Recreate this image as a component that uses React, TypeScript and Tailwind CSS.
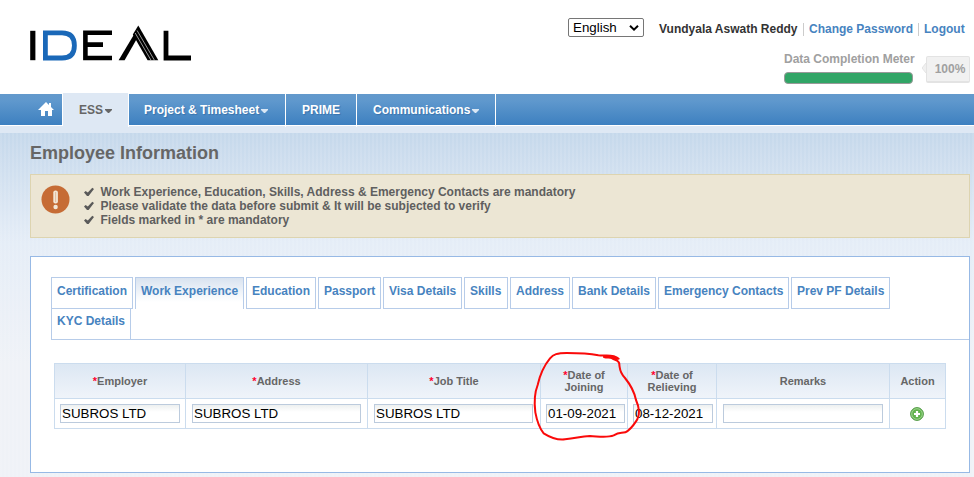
import React from "react";

const tabs: [string, string][] = [
  ["Certification", "w-[82px]"],
  ["Work Experience", "w-[109px]"],
  ["Education", "w-[70px]"],
  ["Passport", "w-[63px]"],
  ["Visa Details", "w-[79px]"],
  ["Skills", "w-[44px]"],
  ["Address", "w-[60px]"],
  ["Bank Details", "w-[84px]"],
  ["Emergency Contacts", "w-[131px]"],
  ["Prev PF Details", "w-[99px]"],
];

const notices = [
  "Work Experience, Education, Skills, Address & Emergency Contacts are mandatory",
  "Please validate the data before submit & It will be subjected to verify",
  "Fields marked in * are mandatory",
];

const columns = [
  { label: ["Employer"], required: true, value: "SUBROS LTD", field: "ml-[5px] w-[120px]" },
  { label: ["Address"], required: true, value: "SUBROS LTD", field: "ml-[6px] w-[169px]" },
  { label: ["Job Title"], required: true, value: "SUBROS LTD", field: "ml-[6px] w-[159px]" },
  { label: ["Date of", "Joining"], required: true, value: "01-09-2021", field: "ml-[5px] w-[79px]" },
  { label: ["Date of", "Relieving"], required: true, value: "08-12-2021", field: "ml-[5px] w-[80px]" },
  { label: ["Remarks"], required: false, value: "", field: "ml-[6px] w-[160px]" },
];

const grid = "grid grid-cols-[131px_182px_173px_87px_89px_173px_56px]";

function Caret({ className }: { className: string }) {
  return (
    <svg className={className} width="7" height="4" viewBox="0 0 7 4" fill="currentColor">
      <path d="M0 0H7V1L4 4H3L0 1Z" />
    </svg>
  );
}

function Logo() {
  return (
    <svg className="mt-[25px] ml-[30px] h-9 w-[162px]" viewBox="30 25 162 36" fill="none" role="img" aria-label="IDEAL">
      <path d="M32.8 30.8V60.2" stroke="#000" strokeWidth="5.2" />
      <path d="M45.4 32.8H62C70.5 32.8 74.4 37.5 74.4 45.4S70.5 58 62 58H45.4Z" stroke="#1a68b8" strokeWidth="4.8" />
      <path d="M112 32.8H85.4V58H112M85.4 44.6H103" stroke="#000" strokeWidth="4.6" />
      <path d="M118.6 60.2L134 34.5L137.3 38L124.6 60.2Z" fill="#000" />
      <path d="M138.3 25.5L158.3 60.2H147.6L132.8 34.5Z" fill="#000" />
      <path d="M135.2 33L151 60.2M137.1 30.5L154.4 60.2" stroke="#ddd" strokeWidth=".7" />
      <path d="M166 30.8V58H191" stroke="#000" strokeWidth="4.8" />
    </svg>
  );
}

function Header() {
  return (
    <header className="flex h-[93px] justify-between bg-white">
      <Logo />
      <div className="flex w-[406px] flex-col">
        <div className="mt-[18px] flex h-5 items-center font-bold text-[#4783c0]">
          <div className="mb-px flex h-[19px] w-[76px] items-center justify-between rounded-[2px] border border-[#767676] pr-1 pl-1 text-[13.33px] font-normal text-black">
            English
            <svg width="10" height="6" viewBox="0 0 10 6" fill="none" stroke="currentColor" strokeWidth="2">
              <path d="M1 .8L5 4.6L9 .8" />
            </svg>
          </div>
          <span className="ml-[15px] w-[144px] pt-0.5 text-[#333]">Vundyala Aswath Reddy</span>
          <span className="mt-0.5 h-[13px] w-px bg-[#ccc]" />
          <span className="ml-[5px] w-[109px] pt-0.5">Change Password</span>
          <span className="mt-0.5 h-[13px] w-px bg-[#ccc]" />
          <span className="ml-[5px] pt-0.5">Logout</span>
        </div>
        <div className="mt-[13px] flex pl-[216px] font-bold text-[#a0a0a0]">
          <div className="w-[138px]">
            <div className="h-[21px] leading-4 whitespace-nowrap">Data Completion Meter</div>
            <div className="h-3 w-[129px] rounded-[4px] border border-[#999] bg-[#31a566]" />
          </div>
          <svg className="mt-3 h-[10px] w-[4px]" viewBox="0 0 4 10">
            <path d="M4 0L0 5L4 10" fill="#f0f0f0" stroke="#e4e4e4" />
          </svg>
          <div className="mt-[5px] flex h-[27px] w-[44px] items-center justify-center rounded-[2px] border border-b-2 border-[#e3e3e3] bg-[#f1f1f1] pl-1">
            100%
          </div>
        </div>
      </div>
    </header>
  );
}

function Nav() {
  return (
    <nav className="h-10 bg-[#dee8f4]">
      <div className="flex h-[33px] bg-[linear-gradient(#fff_1px,#6399cc_1px,#5f98cd_8px,#3d80c0_32px,#fff_32px)] font-bold text-white">
        <div className="h-8 w-[63px] border-r border-white pt-[9px] pl-[38px]">
          <svg width="16" height="14" viewBox="0 0 16 14" fill="#fff">
            <path d="M8 0L11 3V1H13V5L16 8H14V14H10V9H7V14H3V8H0Z" />
          </svg>
        </div>
        <div className="flex h-[34px] w-[65px] items-center justify-center gap-[2px] bg-[#dee8f4] text-[#666]">
          <span>ESS</span>
          <Caret className="mt-0.5" />
        </div>
        <div className="flex h-[34px] w-[158px] items-center border-x border-white pl-[15px] [text-shadow:1px_1px_1px_#3973ad]">
          Project &amp; Timesheet
          <Caret className="mt-0.5 ml-[2px] text-[#d9e7f5]" />
        </div>
        <div className="flex h-[34px] w-[71px] items-center border-r border-white pl-4 [text-shadow:1px_1px_1px_#3973ad]">PRIME</div>
        <div className="flex h-[34px] w-[139px] items-center border-r border-white pl-[16px] [text-shadow:1px_1px_1px_#3973ad]">
          Communications
          <Caret className="mt-0.5 ml-[2px] text-[#d9e7f5]" />
        </div>
      </div>
    </nav>
  );
}

function Notice() {
  return (
    <section className="flex h-16 w-[940px] border border-[#ddd4b0] bg-[#ece6d4] pt-[10px] pl-[10px]">
      <svg width="29" height="29" viewBox="0 0 29 29">
        <circle cx="14.5" cy="14.5" r="14" fill="#c66c35" />
        <rect x="12.3" y="5.5" width="4.6" height="13" rx="2" fill="#f2e7d7" />
        <rect x="14.1" y="7" width="1" height="10" fill="#c66c35" opacity=".35" />
        <circle cx="14.6" cy="22" r="2.2" fill="#f2e7d7" />
      </svg>
      <ul className="ml-[14px] font-bold text-[#5f5f5f]">
        {notices.map((text) => (
          <li key={text} className="flex h-[14px] items-center">
            <svg className="mr-[6.5px]" width="10" height="10" viewBox="0 0 10 10" fill="#5a5a5a">
              <path d="M0 5.5L1.6 4L3.8 5.6L8.3 .8L10 2L4.6 9H3Z" />
            </svg>
            {text}
          </li>
        ))}
      </ul>
    </section>
  );
}

function Tabs() {
  return (
    <div className="h-[63px] border-b border-[#b7cce9] font-bold text-[#4783c0]">
      <div className="flex h-8 gap-[2px]">
        {tabs.map(([label, width]) => (
          <div
            key={label}
            className={`${width} h-8 shrink-0 border border-[#b7cce9] pt-[5px] pl-[5px] leading-4 whitespace-nowrap ${
              label === "Work Experience" ? "border-b-0 bg-[linear-gradient(#d9e3f0,#fff_24px)]" : ""
            }`}
          >
            {label}
          </div>
        ))}
      </div>
      <div className="h-[30px] w-20 border-x border-[#b7cce9] pt-1 pl-[5px] leading-4">KYC Details</div>
    </div>
  );
}

function ExperienceTable() {
  return (
    <div className="mt-[23px] ml-[3px] w-[892px] border-t border-l border-[#cbdcee]">
      <div className={`${grid} h-[35px] bg-[linear-gradient(#dce7f3,#f0f4fa)] text-center text-[11px] leading-3 font-bold text-[#666]`}>
        {columns.map((c) => (
          <div key={c.label.join(" ")} className="flex flex-col items-center justify-center border-r border-b border-[#cbdcee]">
            {c.label.map((line, i) => (
              <div key={line}>
                {c.required && i === 0 && <span className="text-[#ff0030]">*</span>}
                {line}
              </div>
            ))}
          </div>
        ))}
        <div className="flex items-center justify-center border-r border-b border-[#cbdcee]">Action</div>
      </div>
      <div className={`${grid} h-[30px]`}>
        {columns.map((c) => (
          <div key={c.label.join(" ")} className="border-r border-b border-[#cbdcee] pt-[5px]">
            <div className={`${c.field} h-[19px] border border-[#bccbdd] bg-[linear-gradient(#edf0f0,#fff_7px)] pl-px text-[13.33px] leading-[17px] text-black`}>
              {c.value}
            </div>
          </div>
        ))}
        <div className="flex items-center justify-center border-r border-b border-[#cbdcee] pr-px">
          <svg width="14" height="14" viewBox="0 0 14 14">
            <circle cx="7" cy="7" r="6.4" fill="#61b34d" stroke="#539a47" />
            <circle cx="7" cy="7" r="5.3" fill="none" stroke="#a5d796" strokeWidth=".9" />
            <path d="M7 4V10M4 7H10" stroke="#fff" strokeWidth="2.2" />
          </svg>
        </div>
      </div>
    </div>
  );
}

export default function App() {
  return (
    <div className="relative h-[477px] w-[974px] overflow-hidden bg-white font-['Liberation_Sans',Arial,sans-serif] text-[12px]">
      <Header />
      <Nav />
      <main className="h-[344px] bg-[repeating-linear-gradient(90deg,#ffffff18_0_2px,#ffffff00_2px_4px),linear-gradient(#c5d8eb,#e5edf7_110px,#eff2f7_230px)] pl-[30px]">
        <h1 className="h-[41px] pt-[9px] text-[18px] leading-[22px] font-bold text-[#666]">Employee Information</h1>
        <Notice />
        <section className="mt-[18px] h-[217px] w-[940px] border border-[#97b9e5] bg-white pt-5 pl-5">
          <Tabs />
          <ExperienceTable />
        </section>
      </main>
      <svg className="pointer-events-none absolute top-[345px] left-[530px] h-[100px] w-[115px]" viewBox="630 285 345 300" fill="none" stroke="#fa0a0a" strokeWidth="6" strokeLinejoin="round" strokeLinecap="round">
        <path d="M896 326C878 311 858 319 835 316C805 310 770 309 740 309C712 309 700 313 690 325C671 348 659 378 653 405C645 425 642 455 646 487C652 519 663 540 671 550C690 562 710 571 735 568C770 565 780 559 810 558C836 559 861 564 881 556C898 546 902 550 916 547C934 538 944 520 952 508C961 490 956 468 948 450C942 420 928 400 915 384C898 367 900 355 898 345C900 330 885 331 877 325C870 321 862 324 852 321C867 323 880 318 892 326" />
      </svg>
    </div>
  );
}
